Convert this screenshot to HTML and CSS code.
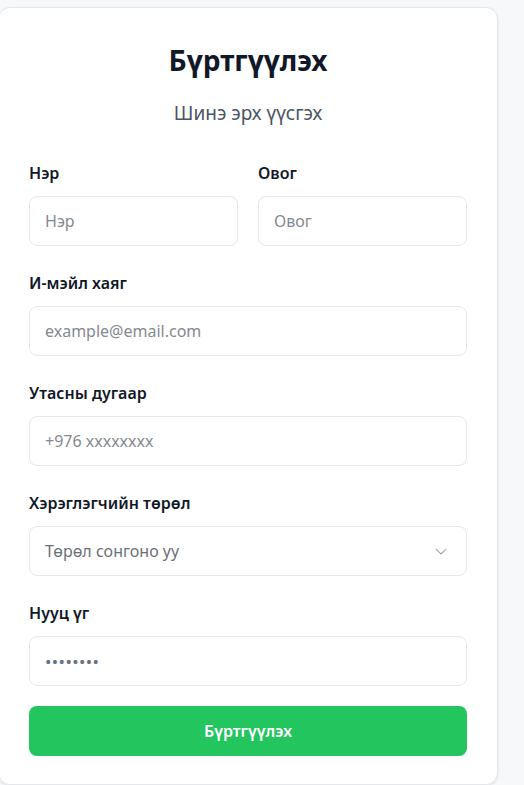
FILE: index.html
```html
<!DOCTYPE html>
<html lang="mn">
<head>
<meta charset="utf-8">
<title>Бүртгүүлэх</title>
<link rel="stylesheet" href="styles.css">
</head>
<body>
<div class="page">
  <form class="card">
    <h1 class="title">Бүртгүүлэх</h1>
    <p class="subtitle">Шинэ эрх үүсгэх</p>

    <div class="row">
      <div class="field">
        <label class="label">Нэр</label>
        <input class="input" type="text" placeholder="Нэр">
      </div>
      <div class="field">
        <label class="label">Овог</label>
        <input class="input" type="text" placeholder="Овог">
      </div>
    </div>

    <div class="field">
      <label class="label">И-мэйл хаяг</label>
      <input class="input" type="email" placeholder="example@email.com">
    </div>

    <div class="field">
      <label class="label">Утасны дугаар</label>
      <input class="input" type="tel" placeholder="+976 xxxxxxxx">
    </div>

    <div class="field">
      <label class="label">Хэрэглэгчийн төрөл</label>
      <div class="select-wrap">
        <div class="input select">Төрөл сонгоно уу</div>
        <svg class="chevron" width="12" height="7" viewBox="0 0 12 7"><path d="M0.8 0.8 L6 6 L11.2 0.8" fill="none" stroke="#a3a7ae" stroke-width="1.2"/></svg>
      </div>
    </div>

    <div class="field last">
      <label class="label">Нууц үг</label>
      <div class="input password"><span class="dots">••••••••</span></div>
    </div>

    <button class="btn" type="button">Бүртгүүлэх</button>
  </form>
</div>
</body>
</html>
```

FILE: styles.css
```css
* { box-sizing: border-box; }

html, body {
  margin: 0;
  padding: 0;
  background: #f7f8fa;
  font-family: "Noto Sans", "Open Sans", sans-serif;
  color: #111827;
}

.page {
  padding-top: 7px;
  width: 524px;
  height: 785px;
  overflow: hidden;
}

.card {
  margin-left: -2px;
  width: 500px;
  background: #ffffff;
  border: 1px solid #e5e7eb;
  border-radius: 12px;
  box-shadow: 0 1px 3px rgba(0, 0, 0, 0.06), 0 1px 2px rgba(0, 0, 0, 0.04);
  padding: 32px 30px 28px 30px;
  display: flex;
  flex-direction: column;
}

.title {
  margin: 0;
  font-size: 28px;
  line-height: 40px;
  font-weight: 700;
  text-align: center;
  color: #111827;
}

.subtitle {
  margin: 19px 0 0 0;
  font-size: 19px;
  line-height: 28px;
  text-align: center;
  color: #4b5563;
}

.row {
  margin-top: 34px;
  display: grid;
  grid-template-columns: 1fr 1fr;
  gap: 20px;
}

.field {
  display: flex;
  flex-direction: column;
  margin-bottom: 25px;
}

.field.last { margin-bottom: 20px; }

.label {
  font-size: 16px;
  line-height: 24px;
  font-weight: 600;
  color: #111827;
  margin-bottom: 11px;
}

.input {
  width: 100%;
  height: 50px;
  border: 1px solid #e5e7eb;
  border-radius: 8px;
  padding: 0 15px;
  font-family: inherit;
  font-size: 16px;
  color: #111827;
  background: #ffffff;
  outline: none;
}

.input::placeholder { color: #85898f; }

.select-wrap { position: relative; }

.select {
  display: flex;
  align-items: center;
  color: #6b6f76;
}

.chevron {
  position: absolute;
  right: 20px;
  top: 22px;
}

.password {
  display: flex;
  align-items: center;
}

.dots {
  font-size: 17px;
  letter-spacing: 0.4px;
  color: #6b7280;
}

.btn {
  height: 50px;
  border: none;
  border-radius: 8px;
  background: #22c55e;
  color: #ffffff;
  font-family: inherit;
  font-size: 16px;
  font-weight: 600;
  cursor: pointer;
}
```
